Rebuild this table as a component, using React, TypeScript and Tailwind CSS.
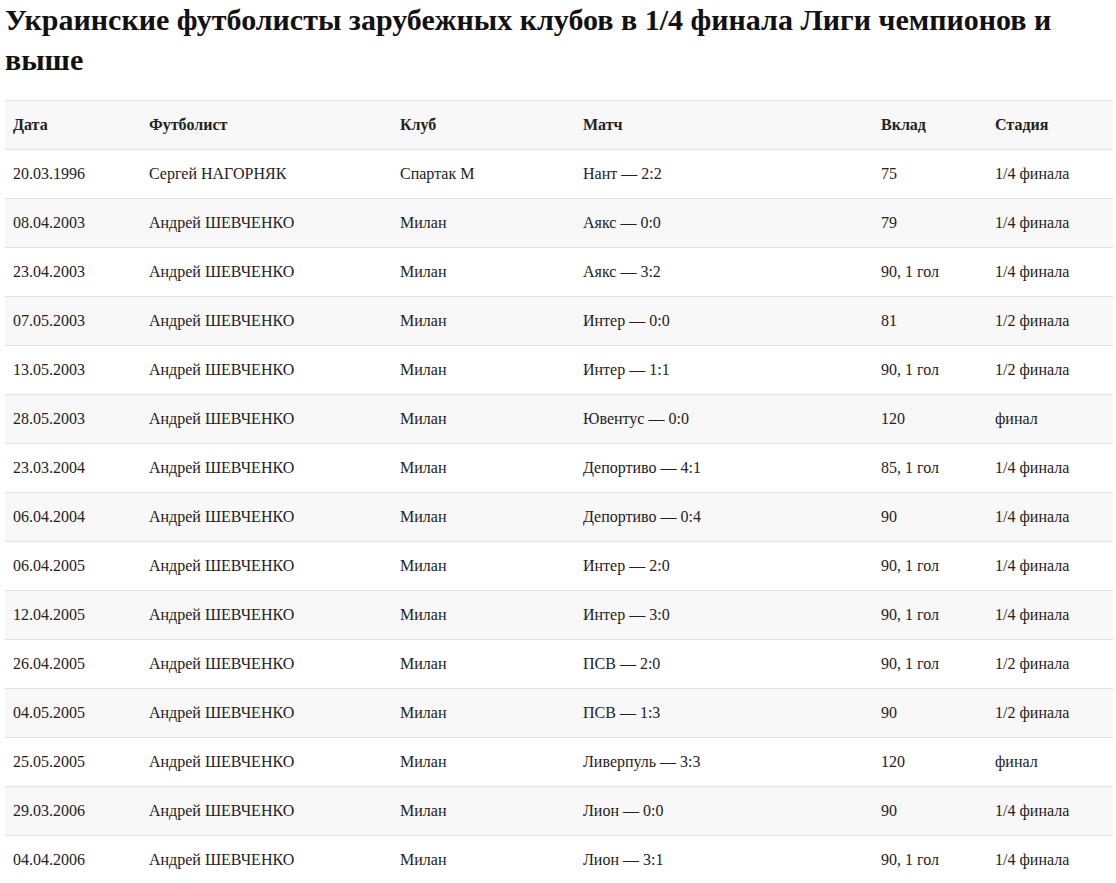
const rows = [
  ["20.03.1996", "Сергей НАГОРНЯК", "Спартак М", "Нант — 2:2", "75", "1/4 финала"],
  ["08.04.2003", "Андрей ШЕВЧЕНКО", "Милан", "Аякс — 0:0", "79", "1/4 финала"],
  ["23.04.2003", "Андрей ШЕВЧЕНКО", "Милан", "Аякс — 3:2", "90, 1 гол", "1/4 финала"],
  ["07.05.2003", "Андрей ШЕВЧЕНКО", "Милан", "Интер — 0:0", "81", "1/2 финала"],
  ["13.05.2003", "Андрей ШЕВЧЕНКО", "Милан", "Интер — 1:1", "90, 1 гол", "1/2 финала"],
  ["28.05.2003", "Андрей ШЕВЧЕНКО", "Милан", "Ювентус — 0:0", "120", "финал"],
  ["23.03.2004", "Андрей ШЕВЧЕНКО", "Милан", "Депортиво — 4:1", "85, 1 гол", "1/4 финала"],
  ["06.04.2004", "Андрей ШЕВЧЕНКО", "Милан", "Депортиво — 0:4", "90", "1/4 финала"],
  ["06.04.2005", "Андрей ШЕВЧЕНКО", "Милан", "Интер — 2:0", "90, 1 гол", "1/4 финала"],
  ["12.04.2005", "Андрей ШЕВЧЕНКО", "Милан", "Интер — 3:0", "90, 1 гол", "1/4 финала"],
  ["26.04.2005", "Андрей ШЕВЧЕНКО", "Милан", "ПСВ — 2:0", "90, 1 гол", "1/2 финала"],
  ["04.05.2005", "Андрей ШЕВЧЕНКО", "Милан", "ПСВ — 1:3", "90", "1/2 финала"],
  ["25.05.2005", "Андрей ШЕВЧЕНКО", "Милан", "Ливерпуль — 3:3", "120", "финал"],
  ["29.03.2006", "Андрей ШЕВЧЕНКО", "Милан", "Лион — 0:0", "90", "1/4 финала"],
  ["04.04.2006", "Андрей ШЕВЧЕНКО", "Милан", "Лион — 3:1", "90, 1 гол", "1/4 финала"],
];

const headers = ["Дата", "Футболист", "Клуб", "Матч", "Вклад", "Стадия"];
const widths = ["w-[136px]", "w-[251px]", "w-[183px]", "w-[298px]", "w-[114px]", "w-[126px]"];

const App = () => {
  return (
    <div className="px-[5px] font-['Liberation_Serif',serif] text-[#222]">
      <h1 className="text-[30px] leading-[40px] font-bold text-[#111] mb-[20px]">
        Украинские футболисты зарубежных клубов в 1/4 финала Лиги чемпионов и выше
      </h1>
      <table className="w-[1108px] table-fixed border-collapse text-base">
        <thead>
          <tr className="bg-[#f8f8f8] border-y border-[#e2e2e2]">
            {headers.map((h, i) => (
              <th key={h} className={`${widths[i]} text-left font-bold px-2 py-3 leading-6`}>
                {h}
              </th>
            ))}
          </tr>
        </thead>
        <tbody>
          {rows.map((r, i) => (
            <tr key={i} className={`border-b border-[#e2e2e2] ${i % 2 === 1 ? "bg-[#f8f8f8]" : "bg-white"}`}>
              {r.map((c, j) => (
                <td key={j} className="px-2 py-3 leading-6">
                  {c}
                </td>
              ))}
            </tr>
          ))}
        </tbody>
      </table>
    </div>
  );
};

export default App;
